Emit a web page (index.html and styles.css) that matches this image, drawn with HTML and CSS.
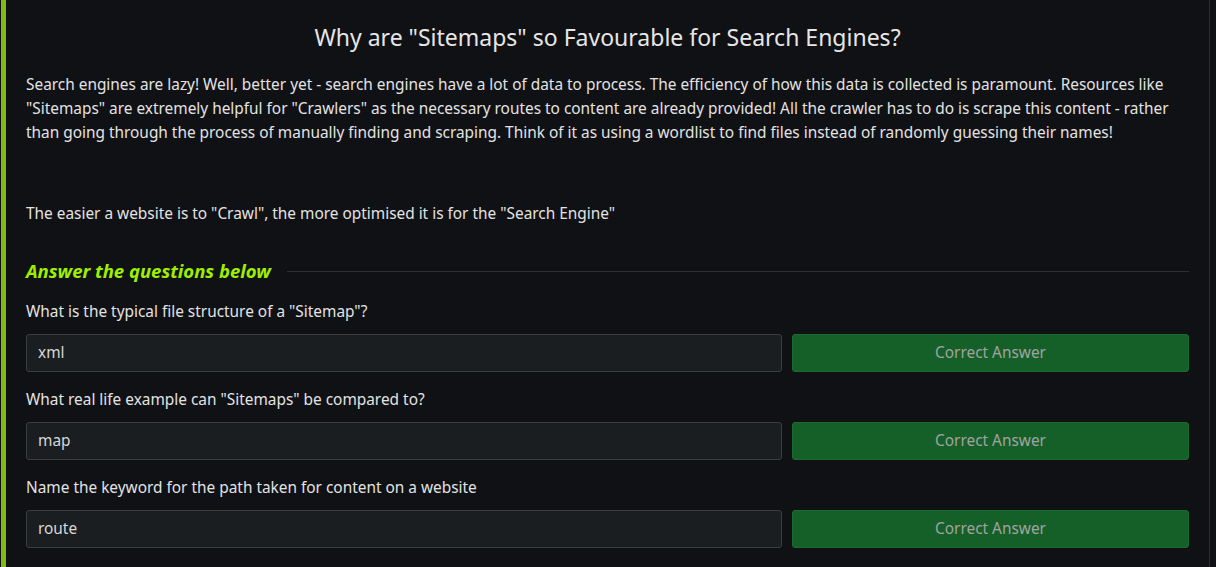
FILE: index.html
```html
<!DOCTYPE html>
<html>
<head>
<meta charset="utf-8">
<link rel="stylesheet" href="styles.css">
</head>
<body>
<div class="page">
  <div class="task">
    <h2 class="title">Why are "Sitemaps" so Favourable for Search Engines?</h2>
    <p class="para">Search engines are lazy! Well, better yet - search engines have a lot of data to process. The efficiency of how this data is collected is paramount. Resources like "Sitemaps" are extremely helpful for "Crawlers" as the necessary routes to content are already provided! All the crawler has to do is scrape this content - rather than going through the process of manually finding and scraping. Think of it as using a wordlist to find files instead of randomly guessing their names!</p>
    <p class="para para-second">The easier a website is to "Crawl", the more optimised it is for the "Search Engine"</p>
    <div class="qhead">
      <span class="qhead-text">Answer the questions below</span>
      <span class="qhead-line"></span>
    </div>
    <div class="question">
      <div class="qtext">What is the typical file structure of a "Sitemap"?</div>
      <div class="qrow">
        <div class="answer">xml</div>
        <div class="btn">Correct Answer</div>
      </div>
    </div>
    <div class="question">
      <div class="qtext">What real life example can "Sitemaps" be compared to?</div>
      <div class="qrow">
        <div class="answer">map</div>
        <div class="btn">Correct Answer</div>
      </div>
    </div>
    <div class="question">
      <div class="qtext">Name the keyword for the path taken for content on a website</div>
      <div class="qrow">
        <div class="answer">route</div>
        <div class="btn">Correct Answer</div>
      </div>
    </div>
  </div>
</div>
</body>
</html>
```

FILE: styles.css
```css
html, body {
  margin: 0;
  padding: 0;
  background: #101114;
}
body {
  font-family: "Noto Sans", "Open Sans", sans-serif;
  color: #e3e3e3;
  height: 567px;
  overflow: hidden;
}
.page {
  margin-left: 1px;
  border-left: 5px solid #7fba16;
  border-right: 1px solid #2a2d31;
  width: 1203px;
  min-height: 567px;
  box-sizing: content-box;
}
.task {
  padding: 0 20px 0 20px;
}
.title {
  margin: 0;
  padding-top: 22px;
  font-size: 23px;
  font-weight: 400;
  text-align: center;
  line-height: 30px;
  color: #e6e6e6;
}
.para {
  margin: 0;
  font-size: 15.4px;
  line-height: 24px;
  padding-top: 21px;
}
.para-second {
  padding-top: 57px;
}
.qhead {
  display: flex;
  align-items: center;
  gap: 16px;
  margin-top: 33px;
}
.qhead-text {
  color: #9fef00;
  font-weight: 700;
  font-style: italic;
  font-size: 18.5px;
  line-height: 24px;
}
.qhead-line {
  flex: 1;
  height: 1px;
  background: #2c2f33;
}
.question {
  margin-top: 19px;
}
.question + .question {
  margin-top: 18px;
}
.qtext {
  font-size: 15.4px;
  line-height: 20px;
}
.qrow {
  display: flex;
  gap: 10px;
  margin-top: 12px;
}
.answer {
  width: 756px;
  height: 38px;
  box-sizing: border-box;
  background: #1b1e21;
  border: 1px solid #3a3d42;
  border-radius: 3px;
  padding: 0 11px;
  font-size: 15.4px;
  line-height: 36px;
  color: #d8d8d8;
}
.btn {
  flex: 1;
  height: 38px;
  box-sizing: border-box;
  background: #155f28;
  border: 1px solid #1c6b2e;
  border-radius: 3px;
  text-align: center;
  font-size: 15.4px;
  line-height: 36px;
  color: #a0a4a0;
}
```
